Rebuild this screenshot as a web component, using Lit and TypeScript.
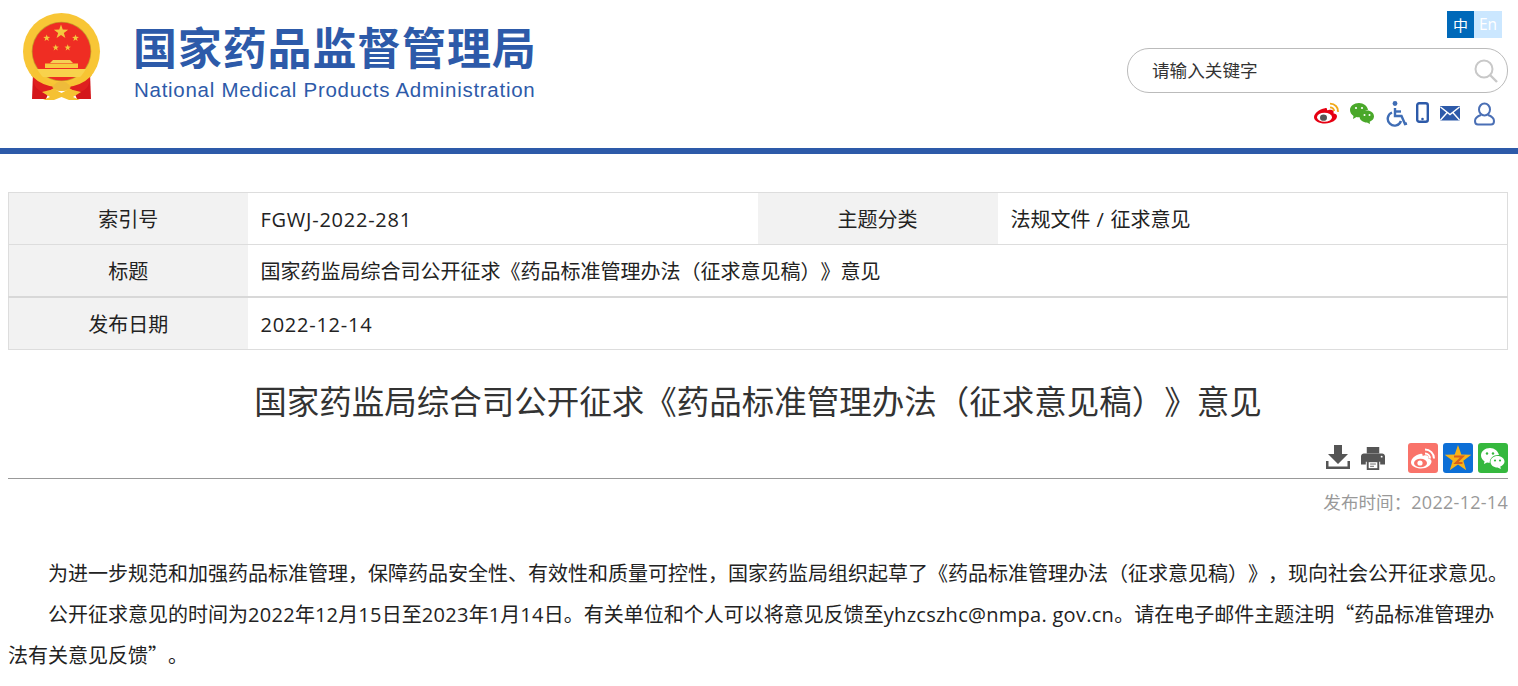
import { LitElement, html, css, svg } from "lit";
import { customElement } from "lit/decorators.js";

const star = (cx: number, cy: number, r: number, fill: string) => {
  const pts: string[] = [];
  for (let i = 0; i < 10; i++) {
    const a = -Math.PI / 2 + (i * Math.PI) / 5;
    const rr = i % 2 ? r * 0.4 : r;
    pts.push(`${(cx + rr * Math.cos(a)).toFixed(2)},${(cy + rr * Math.sin(a)).toFixed(2)}`);
  }
  return svg`<polygon points=${pts.join(" ")} fill=${fill}></polygon>`;
};

@customElement("app-root")
export class AppRoot extends LitElement {
  static styles = css`
    :host {
      display: block;
      font-family: "Noto Sans CJK SC", "Open Sans", sans-serif;
      text-spacing-trim: space-all;
      color: #222;
      background: #fff;
      height: 686px;
      overflow: hidden;
    }
    .lat { font-family: "Open Sans", sans-serif; letter-spacing: 0.28px; }
    table .lat { letter-spacing: 0.75px; }
    .header {
      height: 148px;
      border-bottom: 6px solid #2d5aa9;
      display: flex;
      justify-content: space-between;
    }
    .brand {
      display: flex;
      align-items: flex-start;
      padding: 13px 0 0 23px;
      gap: 33px;
    }
    .emblem { width: 78px; height: 88px; display: block; }
    .wordmark { display: flex; flex-direction: column; color: #2d5aa9; }
    .wm-cn {
      font-size: 44px;
      line-height: 50px;
      font-weight: 700;
      letter-spacing: 0.85px;
      margin-top: 8px;
      margin-left: -1px;
      white-space: nowrap;
      width: 404px;
    }
    .wm-en {
      font-family: "Liberation Sans", Arial, sans-serif;
      font-size: 20.5px;
      line-height: 24px;
      letter-spacing: 0.72px;
      margin-top: 7px;
      white-space: nowrap;
    }
    .tools {
      width: 391px;
      padding: 11px 10px 0 0;
      display: flex;
      flex-direction: column;
      align-items: flex-end;
    }
    .lang { display: flex; margin-right: 6px; }
    .lang span {
      width: 27px;
      height: 27px;
      display: flex;
      align-items: center;
      justify-content: center;
      font-size: 15px;
      line-height: 27px;
      color: #fff;
    }
    .lang .cn { background: #0069b9; }
    .lang .en { background: #cbe7ff; width: 28px; font-family: "Open Sans", sans-serif; font-size: 15.5px; }
    .search {
      margin-top: 10px;
      height: 43px;
      border: 1px solid #bbb;
      border-radius: 22px;
      display: flex;
      align-items: center;
      justify-content: space-between;
      padding: 0 8px 0 24px;
      width: 347px;
      font-size: 17.6px;
      color: #333;
    }
    .search span { position: relative; top: -1px; }
    .search svg { width: 26px; height: 26px; }
    .icons {
      margin-top: 8px;
      height: 26px;
      margin-right: 12px;
    }
    .icons svg { display: block; }
    .main { padding: 38px 10px 0 8px; }
    table {
      width: 1500px;
      border-collapse: collapse;
      table-layout: fixed;
      font-size: 20px;
    }
    td {
      border-top: 1px solid #ddd;
      border-bottom: 1px solid #ddd;
      height: 52px;
      padding: 0 12px 0 13px;
      box-sizing: border-box;
    }
    tr:nth-child(2) td { border-bottom: 2px solid #d8d8d8; }
    tr:nth-child(3) td { height: 53px; }
    td:first-child { border-left: 1px solid #ddd; }
    td:last-child { border-right: 1px solid #ddd; }
    .th { background: #f2f2f2; text-align: center; padding: 0; }
    col.label { width: 240px; }
    col.first { width: 239px; }
    col.value { width: 510px; }
    h1 {
      margin: 27px 0 0;
      text-align: center;
      font-weight: 400;
      font-size: 32.5px;
      line-height: 46px;
      color: #333;
      white-space: nowrap;
    }
    .share {
      margin-top: 20px;
      height: 35px;
      display: flex;
      justify-content: flex-end;
      align-items: flex-start;
      border-bottom: 1px solid #999;
    }
    .share svg { display: block; }
    .date {
      text-align: right;
      font-size: 17.6px;
      line-height: 24px;
      color: #999;
      margin-top: 11px;
    }
    .date .lat { font-size: 18px; }
    .body { margin-top: 39px; font-size: 20px; line-height: 40.5px; color: #222; }
    .line { margin: 0; white-space: nowrap; text-indent: 40px; }
    .line.tail { text-indent: 0; }
  `;

  emblem() {
    return html`<svg class="emblem" viewBox="0 0 78 88">
      <path d="M10 60 L9 86 L23 86 L30 70 Z" fill="#d4161b"></path>
      <path d="M67 60 L68 86 L54 86 L47 70 Z" fill="#d4161b"></path>
      <circle cx="38.500" cy="38.500" r="38.500" fill="#f8c636"></circle>
      <circle cx="38.500" cy="38.500" r="29.800" fill="#c79a2a"></circle>
      <circle cx="38.500" cy="38.500" r="29" fill="#ef2d23"></circle>
      <path d="M13 56 H64 L60 64 H17 Z" fill="#f8d24c"></path>
      <path d="M22 55 V50.500 H55 V55 Z" fill="#f8c93e"></path>
      <path d="M27 50 L30 47 H47 L50 50 Z" fill="#f6cf55"></path>
      <path d="M13 54 Q22 72 38.500 72 Q55 72 64 54 L69 62 Q58 78 38.500 78 Q19 78 8 62 Z" fill="#f7c433"></path>
      <path d="M10 64 Q10 78 24 80 L32 74 Q18 72 10 64 Z M67 64 Q67 78 53 80 L45 74 Q59 72 67 64 Z" fill="#df1f1f"></path>
      <path d="M29 74 Q38.500 62 48 74 Q38.500 82 29 74 Z" fill="#eebb3a"></path>
      <path d="M19 79 L31 76 L38.500 80 L46 76 L58 79 L50 84 L57 87 H46 L38.500 84 L31 87 H20 L27 84 Z" fill="#f5c132"></path>
      ${star(38, 19, 7.5, "#f4c93e")}
      ${star(23.7, 25, 3.6, "#f4c93e")}
      ${star(52.5, 25, 3.6, "#f4c93e")}
      ${star(32.7, 34.7, 3.4, "#f4c93e")}
      ${star(44.7, 34.7, 3.4, "#f4c93e")}
    </svg>`;
  }

  topIcons() {
    return html`<svg width="184" height="26" viewBox="0 0 184 26">
      <!-- weibo -->
      <g transform="translate(2,0) scale(1,0.9)">
        <path d="M11 8 C5 9 0 14 0 18 C0 22 5 25 11 25 C18 25 23 21 23 17 C23 14 20 14 19.500 13.500 C20.500 10.500 18 9 14.500 10 C13.500 10.500 13 10.500 13 9.500 C13 8 12.500 7.500 11 8 Z" fill="#e60012"></path>
        <ellipse cx="10.500" cy="18" rx="7.500" ry="5" fill="#fff"></ellipse>
        <circle cx="9.500" cy="18.500" r="3.500" fill="#555"></circle>
        <path d="M16 3 A8 8 0 0 1 24 12" fill="none" stroke="#f0a818" stroke-width="2"></path>
        <path d="M16 7 A4 4 0 0 1 20 11" fill="none" stroke="#f0a818" stroke-width="2"></path>
      </g>
      <!-- wechat -->
      <g transform="translate(38,2)">
        <path d="M9 0 C4 0 0 3 0 7 C0 9.500 1.500 11.500 3.500 13 L3 16 L6.500 14 C8 14.300 9 14.300 10 14 C12 8 17 7 18 7 C17.500 3 13.500 0 9 0 Z" fill="#4aa82a"></path>
        <path d="M17 7.500 C13 7.500 9.500 10 9.500 13.500 C9.500 17 13 19.500 17 19.500 L20 21 L19.700 18.700 C22 17.700 24 16 24 13.500 C24 10 21 7.500 17 7.500 Z" fill="#4aa82a"></path>
        <circle cx="6" cy="5" r="1.100" fill="#fff"></circle><circle cx="12" cy="5" r="1.100" fill="#fff"></circle>
        <circle cx="14.500" cy="12" r="1" fill="#fff"></circle><circle cx="19.500" cy="12" r="1" fill="#fff"></circle>
      </g>
      <!-- accessibility -->
      <g transform="translate(74,0)" fill="none" stroke="#3f6db5" stroke-width="2.400">
        <circle cx="9" cy="2.500" r="2.400" fill="#3f6db5" stroke="none"></circle>
        <path d="M9 7 V15 H15.500 L19 23 L21 22.500"></path>
        <path d="M9 10.500 H15"></path>
        <path d="M6 11.500 A6.800 6.800 0 1 0 15 20"></path>
      </g>
      <!-- phone -->
      <g transform="translate(104,1)">
        <rect x="1.200" y="1.200" width="10.600" height="18.600" rx="2" fill="none" stroke="#2d5aa9" stroke-width="2.400"></rect>
        <circle cx="6.500" cy="17" r="1.300" fill="#2d5aa9"></circle>
      </g>
      <!-- mail -->
      <g transform="translate(128,5)">
        <rect x="0" y="0" width="20" height="14.500" rx="1" fill="#2d5aa9"></rect>
        <path d="M0.500 1 L10 8.500 L19.500 1 M0.500 14 L7 6.800 M19.500 14 L13 6.800" fill="none" stroke="#fff" stroke-width="1.400"></path>
      </g>
      <!-- user -->
      <g transform="translate(162,2)" fill="none" stroke="#4a6fb5" stroke-width="2">
        <ellipse cx="10.500" cy="6.500" rx="5.500" ry="6"></ellipse>
        <path d="M7 12 C3 13.500 1 16 1 18 C1 20 2 21.500 4 21.500 H17 C19 21.500 20 20 20 18 C20 16 18 13.500 14 12"></path>
      </g>
    </svg>`;
  }

  shareIcons() {
    return html`<svg width="183" height="32" viewBox="0 0 183 32">
      <!-- download -->
      <g fill="#555">
        <path d="M9 2 H17 V11 H23 L13 21 L3 11 H9 Z"></path>
        <path d="M1 18 H3.500 V23.500 H22.500 V18 H25 V26 H1 Z"></path>
      </g>
      <!-- print -->
      <g transform="translate(36,4) scale(0.96,0.92)">
        <path d="M6 0 H19 V7 H6 Z" fill="#555"></path>
        <path d="M3 7 H22 C23.500 7 25 8.500 25 10 V19 H20 V16 H5 V19 H0 V10 C0 8.500 1.500 7 3 7 Z" fill="#555"></path>
        <path d="M6 14 H19 V25 H6 Z" fill="#555"></path>
        <path d="M8 16.500 H17 V23 H8 Z" fill="#fff"></path>
        <path d="M9.500 18.500 H15.500 M9.500 21 H13.500" stroke="#666" stroke-width="1"></path>
        <circle cx="21.500" cy="10.500" r="1" fill="#fff"></circle>
      </g>
      <!-- weibo tile -->
      <g transform="translate(83,0)">
        <rect width="30" height="30" rx="3" fill="#f9736a"></rect>
        <path d="M12 11 C7 12 3 16 3 19.500 C3 23 8 25.500 13 25.500 C19 25.500 23.500 22 23.500 18.500 C23.500 16 21 16 20.500 15.500 C21.500 13 19 11.500 16 12.500 C14.500 13 14 12.500 14.500 11.500 C14.500 10.500 13.500 10.500 12 11 Z" fill="#fff"></path>
        <ellipse cx="12.500" cy="20" rx="6.500" ry="4.300" fill="#f9736a"></ellipse>
        <circle cx="12" cy="20" r="2.600" fill="#fff"></circle>
        <path d="M17 6.500 A9 9 0 0 1 26 15.500 M17 10.500 A5 5 0 0 1 22 15.500" fill="none" stroke="#fff" stroke-width="2"></path>
      </g>
      <!-- qzone tile -->
      <g transform="translate(118,0)">
        <rect width="30" height="30" rx="3" fill="#0d6fd6"></rect>
        ${star(15, 16, 14, "#f7b318")}
        <path d="M11 13.500 H19.500 L13 20 H19.500" fill="none" stroke="#d9601a" stroke-width="2.200"></path>
      </g>
      <!-- wechat tile -->
      <g transform="translate(153,0)">
        <rect width="30" height="30" rx="3" fill="#35b83e"></rect>
        <path d="M12 5 C7 5 3 8.300 3 12.500 C3 15 4.500 17 6.500 18.300 L6 21 L9 19.400 C10 19.700 11 19.800 11.800 19.800 C11.300 15 16 11.500 21 12 C20 8 16.500 5 12 5 Z" fill="#fff"></path>
        <path d="M19.500 13 C15.500 13 12.500 15.500 12.500 18.700 C12.500 22 15.500 24.500 19.500 24.500 L22.800 26 L22.300 23.500 C24.500 22.500 26.500 20.800 26.500 18.700 C26.500 15.500 23.500 13 19.500 13 Z" fill="#fff"></path>
        <circle cx="9" cy="10.500" r="1.200" fill="#35b83e"></circle><circle cx="15" cy="10.500" r="1.200" fill="#35b83e"></circle>
        <circle cx="17" cy="17.500" r="1.100" fill="#35b83e"></circle><circle cx="22" cy="17.500" r="1.100" fill="#35b83e"></circle>
      </g>
    </svg>`;
  }

  render() {
    return html`
      <header class="header">
        <div class="brand">
          ${this.emblem()}
          <div class="wordmark">
            <div class="wm-cn">国家药品监督管理局</div>
            <div class="wm-en">National Medical Products Administration</div>
          </div>
        </div>
        <div class="tools">
          <div class="lang"><span class="cn">中</span><span class="en">En</span></div>
          <div class="search">
            <span>请输入关键字</span>
            <svg viewBox="0 0 26 26" fill="none" stroke="#c8c8c8">
              <circle cx="11" cy="11" r="8.500" stroke-width="2"></circle>
              <path d="M17 17 L24 24" stroke-width="2.400"></path>
            </svg>
          </div>
          <div class="icons">${this.topIcons()}</div>
        </div>
      </header>
      <main class="main">
        <table>
          <colgroup><col class="first"><col class="value"><col class="label"><col></colgroup>
          <tr>
            <td class="th">索引号</td><td><span class="lat">FGWJ-2022-281</span></td>
            <td class="th">主题分类</td><td>法规文件<span class="lat"> / </span>征求意见</td>
          </tr>
          <tr>
            <td class="th">标题</td>
            <td colspan="3">国家药监局综合司公开征求《药品标准管理办法（征求意见稿）》意见</td>
          </tr>
          <tr>
            <td class="th">发布日期</td><td colspan="3"><span class="lat">2022-12-14</span></td>
          </tr>
        </table>
        <h1>国家药监局综合司公开征求《药品标准管理办法（征求意见稿）》意见</h1>
        <div class="share">${this.shareIcons()}</div>
        <div class="date">发布时间：<span class="lat">2022-12-14</span></div>
        <div class="body">
          <p class="line">为进一步规范和加强药品标准管理，保障药品安全性、有效性和质量可控性，国家药监局组织起草了《药品标准管理办法（征求意见稿）》，现向社会公开征求意见。</p>
          <p class="line">公开征求意见的时间为<span class="lat">2022</span>年<span class="lat">12</span>月<span class="lat">15</span>日至<span class="lat">2023</span>年<span class="lat">1</span>月<span class="lat">14</span>日。有关单位和个人可以将意见反馈至<span class="lat">yhzcszhc@nmpa. gov.cn</span>。请在电子邮件主题注明“药品标准管理办</p>
          <p class="line tail">法有关意见反馈”。</p>
        </div>
      </main>
    `;
  }
}
